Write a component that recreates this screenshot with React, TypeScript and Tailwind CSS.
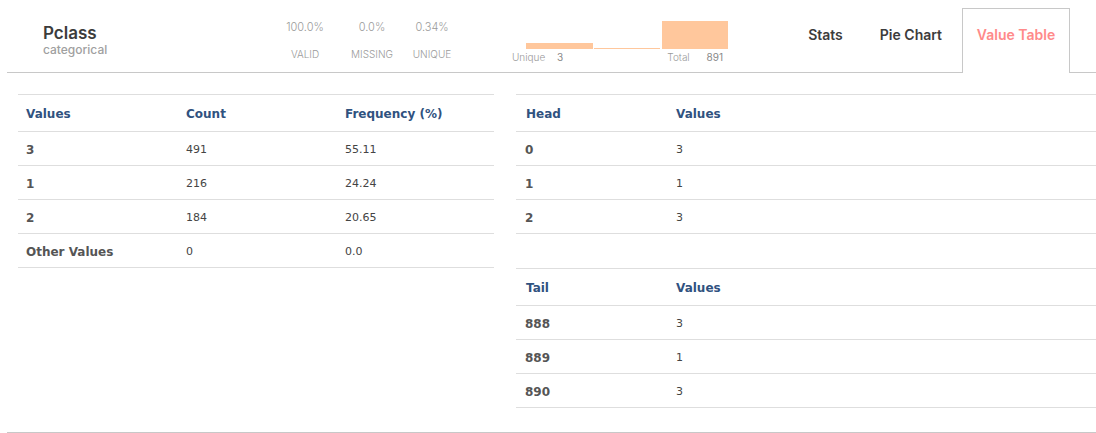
import React from "react";

const stats = [
  { value: "100.0%", label: "VALID", cls: "w-[60px]" },
  { value: "0.0%", label: "MISSING", cls: "w-[60px] ml-[7px]" },
  { value: "0.34%", label: "UNIQUE", cls: "w-[60px]" },
];

const valueRows = [
  { value: "3", count: "491", freq: "55.11" },
  { value: "1", count: "216", freq: "24.24" },
  { value: "2", count: "184", freq: "20.65" },
  { value: "Other Values", count: "0", freq: "0.0" },
];

const headRows = [
  { idx: "0", value: "3" },
  { idx: "1", value: "1" },
  { idx: "2", value: "3" },
];

const tailRows = [
  { idx: "888", value: "3" },
  { idx: "889", value: "1" },
  { idx: "890", value: "3" },
];

const tableFont = { fontFamily: '"DejaVu Sans", Verdana, sans-serif' };

const SmallTable = ({
  title,
  rows,
}: {
  title: string;
  rows: { idx: string; value: string }[];
}) => (
  <div className="border-t border-[#dedede]" style={tableFont}>
    <div className="flex items-center h-[37px] pt-[2px] border-b border-[#dedede] text-[12px] font-bold text-[#30527f]">
      <div className="w-[160px] pl-[10px]">{title}</div>
      <div className="flex-1">Values</div>
    </div>
    {rows.map((r) => (
      <div
        key={r.idx}
        className="flex items-center h-[34px] pt-[3px] border-b border-[#dedede]"
      >
        <div className="w-[160px] pl-[9px] text-[12px] font-bold text-[#555]">
          {r.idx}
        </div>
        <div className="flex-1 text-[11px] text-[#444]">{r.value}</div>
      </div>
    ))}
  </div>
);

export default function App() {
  return (
    <div
      className="w-[1096px] h-[433px] bg-white overflow-hidden"
      style={{ fontFamily: 'Inter, "Liberation Sans", sans-serif' }}
    >
      {/* header */}
      <div className="flex h-[73px] pl-[7px]">
        <div className="flex-1 flex items-start border-b border-[#c8c8c8]">
          <div className="ml-[36px] w-[232px] flex flex-col pt-[23px]">
            <span className="text-[17px] leading-[20px] font-semibold text-[#3c3c3c]">
              Pclass
            </span>
            <span className="text-[12px] leading-[14px] font-medium text-[#a0a0a0]">
              categorical
            </span>
          </div>
          <div className="flex h-full">
            {stats.map((s) => (
              <div
                key={s.label}
                className={`${s.cls} flex flex-col items-center pt-[20px]`}
              >
                <span className="text-[11px] leading-[14px] font-light text-[#9a9a9a]">
                  {s.value}
                </span>
                <span className="mt-[13px] text-[10px] leading-[14px] font-light text-[#9a9a9a]">
                  {s.label}
                </span>
              </div>
            ))}
          </div>
          <div className="ml-[50px] w-[216px] flex flex-col pt-[21px]">
            <div className="flex items-end h-[28px] ml-[14px] gap-[1px]">
              <div className="w-[67px] h-[6px] bg-[#ffc79c]" />
              <div className="w-[66px] h-[1px] bg-[#ffc79c]" />
              <div className="w-[66px] h-[28px] bg-[#ffc79c] ml-[1px]" />
            </div>
            <div className="flex justify-between pr-[5px] mt-[1px] text-[10px] leading-[14px] text-[#9a9a9a]">
              <span className="font-light">
                Unique <span className="ml-[9px] font-normal text-[#888]">3</span>
              </span>
              <span className="font-light">
                Total <span className="ml-[14px] font-normal text-[#888]">891</span>
              </span>
            </div>
          </div>
          <div className="flex-1" />
          <div className="flex gap-[5px] mr-[4px] text-[14px] font-semibold text-[#3c3c3c] self-stretch pt-[26px]">
            <div className="px-[16px] leading-[18px]">Stats</div>
            <div className="px-[16px] leading-[18px]">Pie Chart</div>
          </div>
        </div>
        <div className="mt-[8px] w-[108px] border border-b-0 border-[#c8c8c8] flex justify-center pt-[17px] text-[14px] leading-[18px] font-semibold text-[#ff8a8a]">
          Value Table
        </div>
        <div className="w-[26px] border-b border-[#c8c8c8]" />
      </div>

      {/* body */}
      <div className="ml-[7px] pl-[11px] pt-[21px] pb-[24px] border-b border-[#c8c8c8] flex gap-[22px]">
        <div className="w-[476px]" style={tableFont}>
          <div className="border-t border-[#dedede]">
            <div className="flex items-center h-[37px] pt-[2px] border-b border-[#dedede] text-[12px] font-bold text-[#30527f]">
              <div className="w-[168px] pl-[8px]">Values</div>
              <div className="w-[159px]">Count</div>
              <div className="flex-1">Frequency (%)</div>
            </div>
            {valueRows.map((r) => (
              <div
                key={r.value}
                className="flex items-center h-[34px] pt-[3px] border-b border-[#dedede]"
              >
                <div className="w-[168px] pl-[8px] text-[12px] font-bold text-[#555]">
                  {r.value}
                </div>
                <div className="w-[159px] text-[11px] text-[#444]">{r.count}</div>
                <div className="flex-1 text-[11px] text-[#444]">{r.freq}</div>
              </div>
            ))}
          </div>
        </div>
        <div className="flex-1 flex flex-col">
          <SmallTable title="Head" rows={headRows} />
          <div className="mt-[34px]">
            <SmallTable title="Tail" rows={tailRows} />
          </div>
        </div>
      </div>
    </div>
  );
}
